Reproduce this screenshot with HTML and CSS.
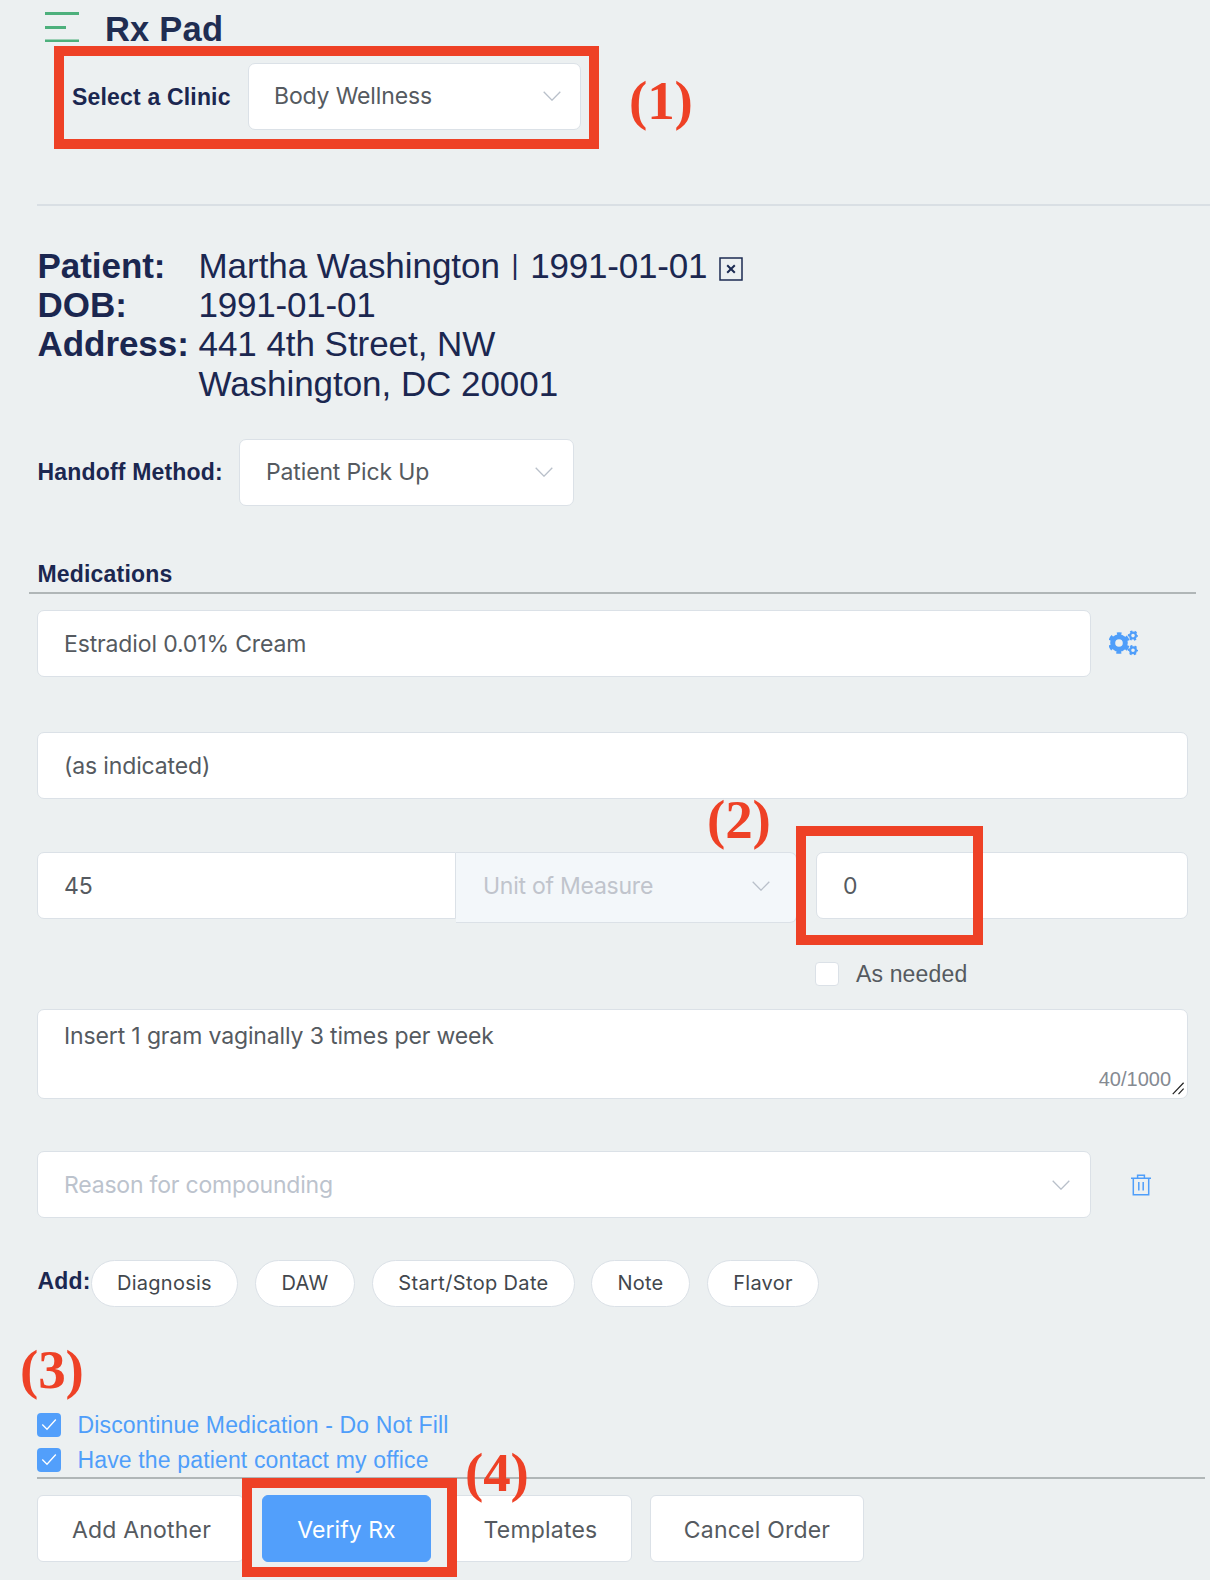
FILE: index.html
```html
<!DOCTYPE html>
<html lang="en">
<head>
<meta charset="utf-8">
<title>Rx Pad</title>
<link rel="stylesheet" href="styles.css">
</head>
<body>
<svg width="0" height="0" class="defs">
  <symbol id="chevron" viewBox="0 0 18 10"><path d="M.7.7 9 9.2 17.3.7" fill="none" stroke="currentColor" stroke-width="1.3"/></symbol>
  <symbol id="tick" viewBox="0 0 24 24"><path d="M5.3 11.5 10 16.3 18.8 6.5" fill="none" stroke="#fff" stroke-width="1.3"/></symbol>
</svg>
<main class="page">
  <header class="top">
    <svg class="menu" viewBox="0 0 34 30"><path d="M0 1.5h34M0 15.5h21M0 28.8h34" stroke="#4db07c" stroke-width="2.8"/></svg>
    <h1 class="title">Rx Pad</h1>
  </header>
  <section class="clinic">
    <span class="label t-clinic">Select a Clinic</span>
    <div class="field select clinic-select"><span>Body Wellness</span><svg class="chev"><use href="#chevron"/></svg></div>
  </section>
  <section class="patient">
    <b>Patient:</b><span>Martha Washington <span class="bar">|</span> <span class="date">1991-01-01</span><svg class="close" viewBox="0 0 24 24"><path d="M1 1h22v22H1z" fill="none" stroke="#1b2a52" stroke-width="1.5"/><path d="M8.2 8.2l7.6 7.6M15.8 8.2l-7.6 7.6" stroke="#1b2a52" stroke-width="2"/></svg></span>
    <b>DOB:</b><span class="date">1991-01-01</span>
    <b>Address:</b><span>441 4th Street, NW<br>Washington, DC 20001</span>
  </section>
  <section class="handoff">
    <span class="label t-handoff">Handoff Method:</span>
    <div class="field select handoff-select"><span>Patient Pick Up</span><svg class="chev"><use href="#chevron"/></svg></div>
  </section>
  <h2 class="label meds">Medications</h2>
  <div class="row drug">
    <div class="field wide"><span>Estradiol 0.01% Cream</span></div>
    <svg class="gears" viewBox="0 0 29 26" fill="none" stroke="#4f9efa">
      <circle cx="10" cy="13" r="6.3" stroke-width="5"/>
      <circle cx="10" cy="13" r="9.2" stroke-width="3.2" stroke-dasharray="4.8 4.834" stroke-dashoffset="2.4" transform="rotate(-90 10 13)"/>
      <g id="cog"><circle cx="24" cy="5.6" r="2.9" stroke-width="2.2"/><circle cx="24" cy="5.6" r="4.3" stroke-width="1.8" stroke-dasharray="2.2 2.303" stroke-dashoffset="1.1"/></g>
      <use href="#cog" y="14.6"/>
    </svg>
  </div>
  <div class="field strength"><span>(as indicated)</span></div>
  <div class="row quantity">
    <div class="field qty"><span>45</span></div>
    <div class="field select unit"><span>Unit of Measure</span><svg class="chev"><use href="#chevron"/></svg></div>
    <div class="field refills"><span>0</span></div>
  </div>
  <div class="check needed"><i class="box"></i><span>As needed</span></div>
  <div class="field area"><span>Insert 1 gram vaginally 3 times per week</span>
    <div class="count">40/1000<svg class="grip" viewBox="0 0 14 14"><path d="M.8 13 12.5.8M7 13l5.5-5.8" stroke="#222" stroke-width="1.3"/></svg></div>
  </div>
  <div class="row reason">
    <div class="field select wide"><span>Reason for compounding</span><svg class="chev"><use href="#chevron"/></svg></div>
    <svg class="trash" viewBox="0 0 20 22" fill="none" stroke="#4f9efa" stroke-width="1.5"><path d="M0 4.2h20M2.3 4.2v16.5h15.4V4.2M6.6 4.2V1.2h6.8v3M7.8 8v8.5M12.2 8v8.5"/></svg>
  </div>
  <div class="adds">
    <span class="label">Add:</span>
    <button class="pill p1">Diagnosis</button><button class="pill p2">DAW</button><button class="pill p3">Start/Stop Date</button><button class="pill p4">Note</button><button class="pill p5">Flavor</button>
  </div>
  <div class="checks">
    <div class="check on"><i class="box"><svg><use href="#tick"/></svg></i><span>Discontinue Medication - Do Not Fill</span></div>
    <div class="check on"><i class="box"><svg><use href="#tick"/></svg></i><span>Have the patient contact my office</span></div>
  </div>
  <footer class="actions">
    <button class="btn b1">Add Another</button><button class="btn b2">Verify Rx</button><button class="btn b3">Templates</button><button class="btn b4">Cancel Order</button>
  </footer>
  <div class="mark m1"></div><div class="mark m2"></div><div class="mark m3"></div>
  <span class="num n1">(1)</span><span class="num n2">(2)</span><span class="num n3">(3)</span><span class="num n4">(4)</span>
</main>
</body>
</html>
```
FILE: styles.css
```css
* { box-sizing: border-box; }
body { margin: 0; background: #ecf0f1; }
.defs { position: absolute; }
.page {
  position: relative; width: 1210px; height: 1580px; overflow: hidden;
  display: flex; flex-direction: column; align-items: flex-start;
  font: 23px/30px "Inter", sans-serif; letter-spacing: -.14px; color: #555a60;
}
i { font-style: normal; }
.top { display: flex; height: 63px; padding: 12px 0 0 45px; }
.menu { width: 34px; height: 30px; margin-right: 26px; }
.title { margin: -3px 0 0; font: bold 34.5px/40px "Liberation Sans", sans-serif; letter-spacing: .2px; color: #1f2d52; }
.label { font: bold 23px/30px "Liberation Sans", sans-serif; letter-spacing: .18px; color: #1b2750; white-space: nowrap; }
.field {
  display: flex; align-items: center; height: 67px; padding: 0 26px;
  background: #fff; border: 1px solid #dbe1e7; border-radius: 7px; white-space: nowrap;
}
.select { justify-content: space-between; }
.chev { width: 18px; height: 10px; color: #b9c0ca; }
.row { display: flex; }
.wide { width: 1054px; }

.clinic { display: flex; align-items: center; margin-left: 37px; width: 1173px; height: 143px; padding: 0 0 74px 35px; border-bottom: 2px solid #d9dfe4; }
.t-clinic { width: 176px; }
.clinic-select { width: 333px; padding: 0 19px 1px 25px; }

.patient {
  display: grid; grid-template-columns: 161px auto; margin: 40px 0 0 37.5px;
  font: 35px/39.2px "Liberation Sans", sans-serif; letter-spacing: -.05px; color: #1b2750; white-space: nowrap;
}
.bar { display: inline-block; width: 11px; font-size: 27px; line-height: 30px; text-align: center; vertical-align: 4px; }
.date { letter-spacing: -.2px; }
.close { width: 24px; height: 24px; margin-left: 12px; vertical-align: -3px; }
.handoff { display: flex; align-items: center; margin: 36px 0 0 37.5px; }
.t-handoff { width: 201.5px; }
.handoff-select { width: 335px; padding-right: 20px; }

.meds { margin: 53px 0 0 29px; width: 1167px; height: 35px; padding-left: 8.5px; border-bottom: 2px solid #b0b6b7; }
.drug { align-items: center; margin: 16px 0 0 37px; }
.drug .field, .strength, .qty, .refills { padding-top: 1px; }
.gears { width: 29px; height: 26px; margin-left: 18px; }
.strength { width: 1151px; margin: 55px 0 0 37px; }
.quantity { margin: 53px 0 0 37px; height: 71px; }
.qty { width: 419px; border-radius: 7px 0 0 7px; }
.unit { width: 341px; height: 71px; border-left: 0; border-radius: 0 7px 7px 0; background: #f3f7fa; color: #c0c4cc; padding: 0 26px 2px 27px; letter-spacing: -.25px; }
.refills { width: 372px; margin-left: 19px; }
.check { display: flex; align-items: center; font: 23px/24px "Liberation Sans", sans-serif; letter-spacing: .15px; white-space: nowrap; }
.box { width: 24px; height: 24px; margin-right: 17px; background: #fff; border: 1px solid #dbe1e7; border-radius: 4px; }
.needed { margin: 39px 0 0 815px; }
.area { position: relative; width: 1151px; height: 90px; margin: 23px 0 0 37px; align-items: flex-start; padding-top: 11px; }
.count { position: absolute; right: 2px; bottom: 3px; display: flex; font: 20px/32px "Liberation Sans", sans-serif; letter-spacing: 0; color: #858a92; }
.grip { width: 13px; height: 13px; margin: 19px 0 0 1px; }
.reason { align-items: center; margin: 52px 0 0 37px; }
.reason .field { color: #bcc3cd; padding-right: 20px; padding-top: 1px; letter-spacing: -.2px; }
.trash { width: 20px; height: 22px; margin: 2px 0 0 40px; }

.adds { display: flex; margin: 42px 0 0 37px; height: 47px; }
.adds .label { width: 54px; padding: 6px 0 0 .5px; }
.pill { height: 47px; margin: 0 17px 0 0; padding: 0; font: 20px/24px "Inter", sans-serif; letter-spacing: .25px; color: #42474d; background: #fff; border: 1px solid #dbe1e7; border-radius: 24px; white-space: nowrap; }
.p1 { width: 147px; } .p2 { width: 100px; } .p3 { width: 203px; margin-right: 16px; letter-spacing: .35px; } .p4 { width: 99px; } .p5 { width: 112px; }

.checks { display: grid; align-content: start; gap: 11px; width: 1168px; margin: 106px 0 0 37px; height: 66px; border-bottom: 2px solid #b0b6b7; }
.on { color: #4f9efa; height: 24px; }
.on .box { background: #529ffb; border: 0; margin-right: 16.5px; }
.box svg { display: block; width: 24px; height: 24px; }
.actions { display: flex; gap: 18px; margin: 16px 0 0 37px; }
.btn { height: 67px; padding: 3px 0 0; font: 23px/30px "Inter", sans-serif; letter-spacing: .2px; color: #555a60; background: #fff; border: 1px solid #dbe1e7; border-radius: 6px; white-space: nowrap; }
.b1 { width: 207px; padding-left: 2px; } .b2 { width: 169px; letter-spacing: .05px; background: #529ffb; border-color: #529ffb; color: #fff; } .b3 { width: 183px; } .b4 { width: 214px; }

.mark { position: absolute; border: 10px solid #ee4126; }
.m1 { left: 54px; top: 46px; width: 545px; height: 103px; }
.m2 { left: 796px; top: 826px; width: 187px; height: 119px; }
.m3 { left: 242px; top: 1478px; width: 215px; height: 99px; }
.num { position: absolute; font: bold 55px/62px "Liberation Serif", serif; color: #ee4126; }
.n1 { left: 629px; top: 70px; }
.n2 { left: 707px; top: 789px; }
.n3 { left: 20px; top: 1339px; }
.n4 { left: 465px; top: 1442px; }
```
